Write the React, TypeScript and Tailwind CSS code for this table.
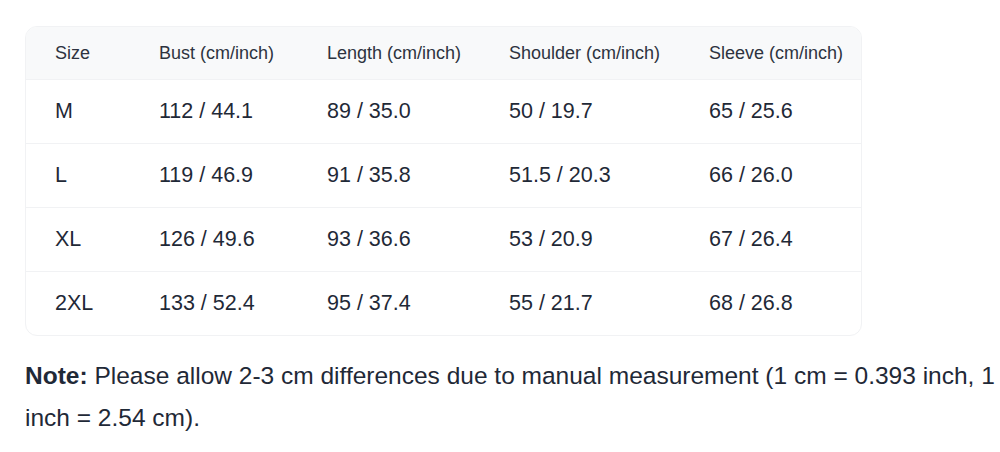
const rows = [
	["M", "112 / 44.1", "89 / 35.0", "50 / 19.7", "65 / 25.6"],
	["L", "119 / 46.9", "91 / 35.8", "51.5 / 20.3", "66 / 26.0"],
	["XL", "126 / 49.6", "93 / 36.6", "53 / 20.9", "67 / 26.4"],
	["2XL", "133 / 52.4", "95 / 37.4", "55 / 21.7", "68 / 26.8"],
];

const headers = ["Size", "Bust (cm/inch)", "Length (cm/inch)", "Shoulder (cm/inch)", "Sleeve (cm/inch)"];
const widths = ["w-[104px]", "w-[168px]", "w-[182px]", "w-[200px]", "w-[181px]"];

export default function App() {
	return (
		<div className="min-h-[452px] bg-white pl-[25px] pt-[26px] text-[#1f2937] font-['Liberation_Sans',Arial,sans-serif]">
			<div className="w-[837px] overflow-hidden rounded-[12px] border border-[#f1f2f4]">
				<div className="flex h-[52px] items-center bg-[#f8f9fa] text-[18px] text-[#2d3340]">
					{ headers.map((h, idx) => (
						<div key={ idx } className={ `${widths[idx]} pl-[29px]` }>{ h }</div>
					)) }
				</div>
				{ rows.map((row, r) => (
					<div key={ r } className="flex h-[64px] items-center border-t border-[#f1f2f4] text-[21.5px]">
						{ row.map((cell, idx) => (
							<div key={ idx } className={ `${widths[idx]} pl-[29px]` }>{ cell }</div>
						)) }
					</div>
				)) }
			</div>
			<p className="mt-[19px] text-[24.5px] leading-[42px]">
				<span className="font-bold">Note:</span> Please allow 2-3 cm differences due to manual measurement (1 cm = 0.393 inch, 1 inch = 2.54 cm).
			</p>
		</div>
	);
}
